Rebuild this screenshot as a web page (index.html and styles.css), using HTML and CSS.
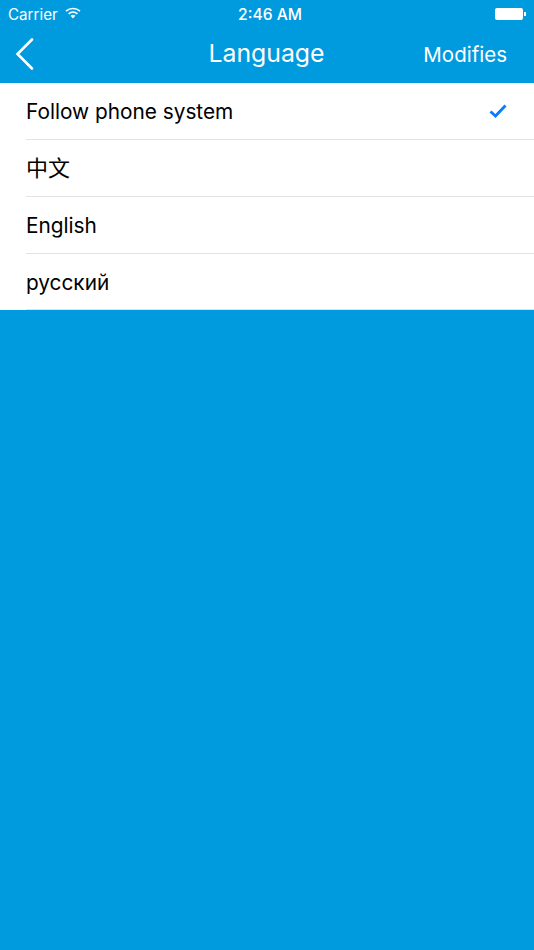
FILE: index.html
```html
<!DOCTYPE html>
<html lang="en">

<head>
    <meta charset="UTF-8" />
    <title>Language</title>
    <link rel="stylesheet" href="styles.css">
</head>

<body>
    <!-- status bar -->
    <div class="status">
        <div class="carrier">
            <span>Carrier</span>
            <svg class="wifi" width="16" height="12" viewBox="0 0 16 12">
                <path d="M1 4.2C5 .6 11 .6 15 4.2" fill="none" stroke="#fff" stroke-width="1.7" />
                <path d="M3.6 6.8C6.2 4.5 9.8 4.5 12.4 6.8" fill="none" stroke="#fff" stroke-width="1.7" />
                <path d="M5.6 8.7C7 7.5 9 7.5 10.4 8.7L8 11.4Z" fill="#fff" />
            </svg>
        </div>
        <div class="time">2:46 AM</div>
        <div class="battery">
            <span class="battery-body"></span>
            <span class="battery-tip"></span>
        </div>
    </div>

    <!-- nav bar -->
    <div class="nav">
        <svg class="back" width="20" height="32" viewBox="0 0 20 32">
            <path d="M17 1.500L2.500 16L17 30.500" fill="none" stroke="#fff" stroke-width="2.600" stroke-linecap="round" />
        </svg>
        <div class="title">Language</div>
        <div class="modifies">Modifies</div>
    </div>

    <!-- language list -->
    <ul class="list">
        <li class="row">
            <span>Follow phone system</span>
            <svg class="check" width="18" height="14" viewBox="0 0 18 14">
                <path d="M1.500 7.500L6.500 12L16.500 1.500" fill="none" stroke="#0a7aff" stroke-width="2.800" />
            </svg>
        </li>
        <li class="row"><span class="cjk">中文</span></li>
        <li class="row"><span>English</span></li>
        <li class="row"><span>русский</span></li>
    </ul>
</body>

</html>
```

FILE: styles.css
```css
* {
    margin: 0;
    padding: 0;
    box-sizing: border-box;
}

ul {
    list-style: none;
}

html,
body {
    height: 100%;
}

body {
    background: #009ade;
    color: #fff;
    font-family: Inter, "Noto Sans CJK SC", "Liberation Sans", sans-serif;
    overflow: hidden;
}

.status {
    height: 27px;
    padding: 1px 8px 0 8px;
    display: grid;
    grid-template-columns: minmax(0, 1fr) auto minmax(0, 1fr);
    align-items: center;
    font-size: 15.2px;
}

.carrier {
    display: flex;
    align-items: center;
    gap: 7px;
}

.wifi {
    margin-top: -3px;
}

.time {
    margin-left: 6px;
    font-size: 15.600px;
    font-weight: 500;
}

.battery {
    display: flex;
    align-items: center;
    justify-content: flex-end;
    margin-top: -1px;
}

.battery-body {
    width: 28px;
    height: 12px;
    background: #fff;
    border-radius: 2px;
}

.battery-tip {
    width: 2px;
    height: 4px;
    margin-left: 1px;
    background: #fff;
}

.nav {
    height: 56px;
    padding: 0 27px 4px 15px;
    display: grid;
    grid-template-columns: minmax(0, 1fr) auto minmax(0, 1fr);
    align-items: center;
}

.back {
    margin-top: 2px;
}

.title {
    margin-left: 11px;
    font-size: 24.800px;
}

.modifies {
    font-size: 20.500px;
    padding-top: 2px;
    text-align: right;
}

.list {
    background: #fff;
    color: #000;
    font-size: 20.800px;
}

.row {
    height: 57px;
    margin-left: 26px;
    padding: 1px 27px 0 0;
    display: flex;
    align-items: center;
    justify-content: space-between;
    border-bottom: 1px solid #e3e3e3;
}

.row:last-child {
    height: 56px;
}

.check {
    margin-top: -2px;
}

.cjk {
    font-size: 22px;
    line-height: 22px;
    margin-top: -2px;
}
```
